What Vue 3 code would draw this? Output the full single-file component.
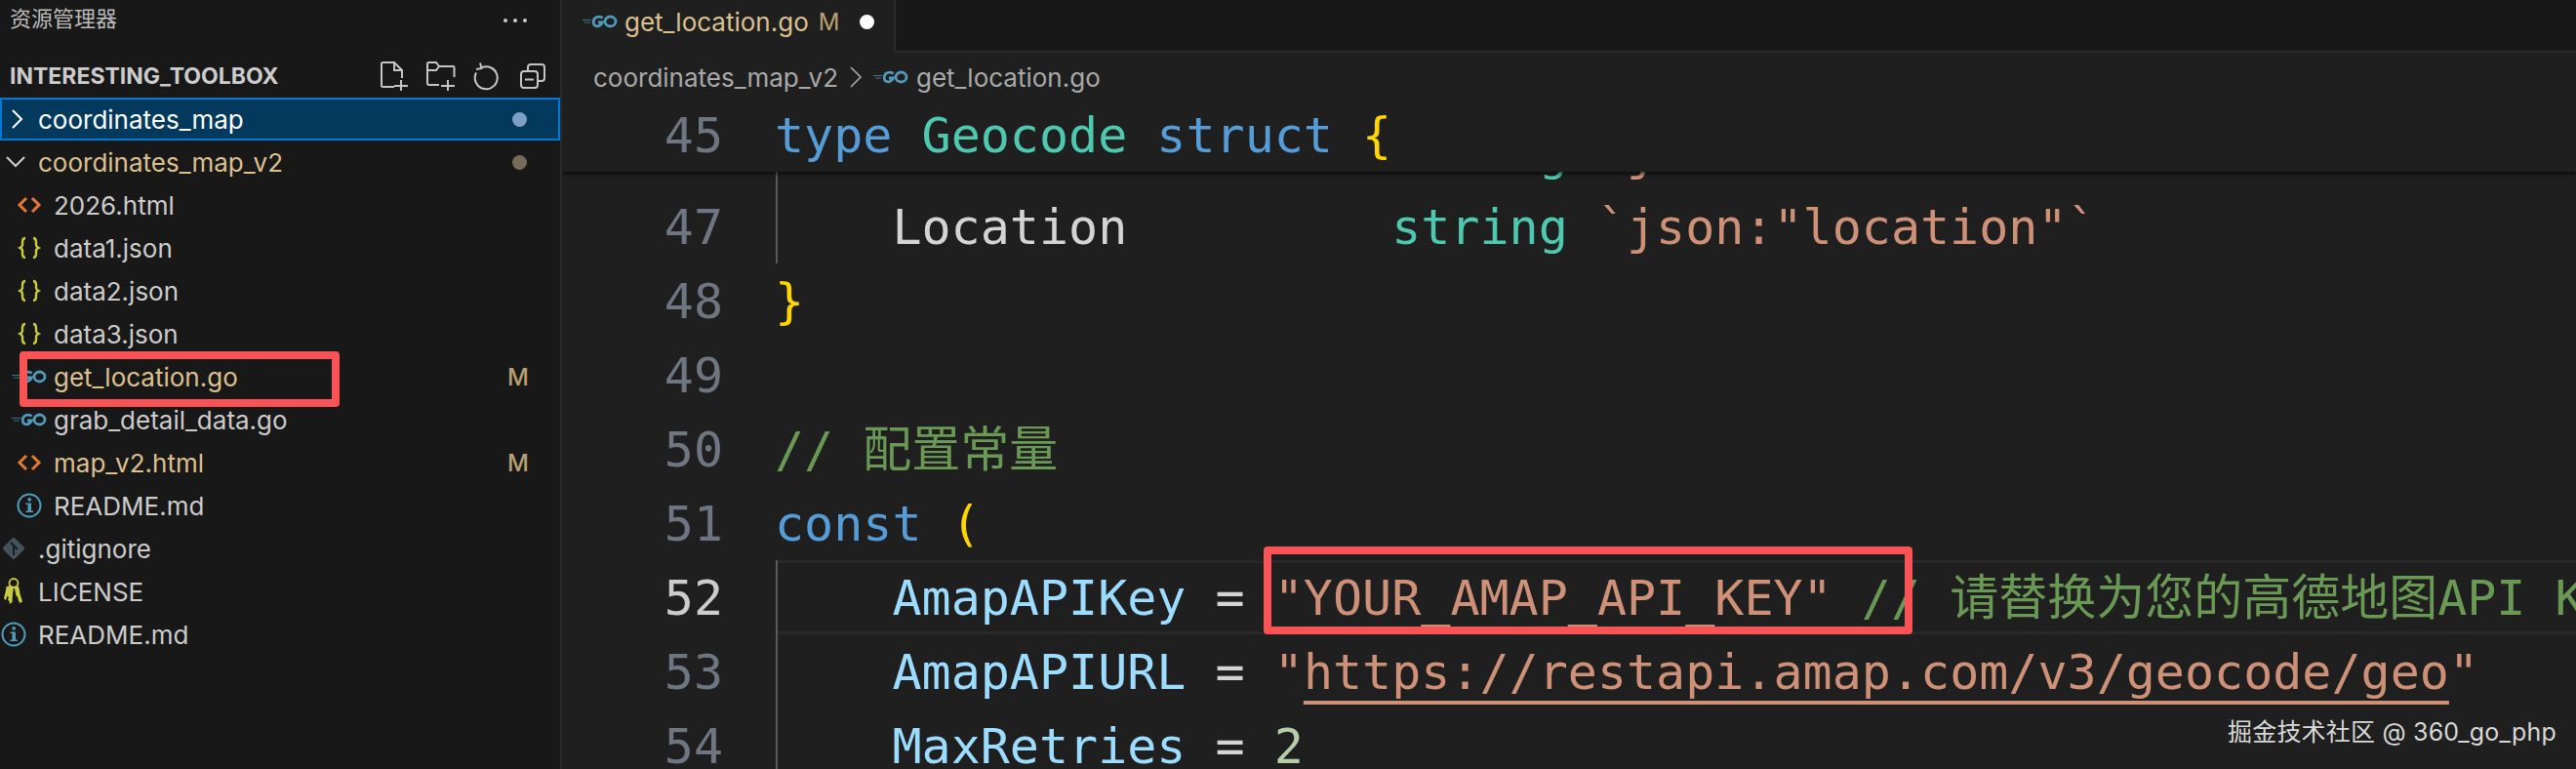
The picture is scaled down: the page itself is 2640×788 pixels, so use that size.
<script setup>
const rows = [
  { name: 'coordinates_map', depth: 0, icon: 'closed', selected: true, dot: '#7e9fc4' },
  { name: 'coordinates_map_v2', depth: 0, icon: 'open', mod: true, dot: '#776b58' },
  { name: '2026.html', depth: 1, icon: 'html' },
  { name: 'data1.json', depth: 1, icon: 'json' },
  { name: 'data2.json', depth: 1, icon: 'json' },
  { name: 'data3.json', depth: 1, icon: 'json' },
  { name: 'get_location.go', depth: 1, icon: 'go', mod: true, badge: 'M' },
  { name: 'grab_detail_data.go', depth: 1, icon: 'go' },
  { name: 'map_v2.html', depth: 1, icon: 'html', mod: true, badge: 'M' },
  { name: 'README.md', depth: 1, icon: 'info' },
  { name: '.gitignore', depth: 0, icon: 'git' },
  { name: 'LICENSE', depth: 0, icon: 'key' },
  { name: 'README.md', depth: 0, icon: 'info' }
]

const lines = [
  { n: 46, guide: true, tokens: [['p', '    Formatted        '], ['t', 'string'], ['p', ' '], ['s', '`json:"formatted"`']] },
  { n: 47, guide: true, tokens: [['p', '    Location         '], ['t', 'string'], ['p', ' '], ['s', '`json:"location"`']] },
  { n: 48, tokens: [['b', '}']] },
  { n: 49, tokens: [] },
  { n: 50, tokens: [['c', '// 配置常量']] },
  { n: 51, tokens: [['k', 'const'], ['p', ' '], ['b', '(']] },
  { n: 52, guide: true, active: true, tokens: [['p', '    '], ['v', 'AmapAPIKey'], ['p', ' = '], ['s', '"YOUR_AMAP_API_KEY"'], ['p', ' '], ['c', '// 请替换为您的高德地图API Key']] },
  { n: 53, guide: true, tokens: [['p', '    '], ['v', 'AmapAPIURL'], ['p', ' = '], ['s', '"'], ['u', 'https://restapi.amap.com/v3/geocode/geo'], ['s', '"']] },
  { n: 54, guide: true, tokens: [['p', '    '], ['v', 'MaxRetries'], ['p', ' = '], ['d', '2']] }
]
</script>

<template>
  <div class="app">
    <aside class="sidebar">
      <div class="title-bar">
        <span class="title">资源管理器</span>
        <span class="more"><i></i><i></i><i></i></span>
      </div>
      <div class="section">
        <span class="section-name">INTERESTING_TOOLBOX</span>
        <div class="actions">
          <svg viewBox="0 0 32 32"><path d="M15 27H3.500a1.500 1.500 0 0 1-1.500-1.500V3.500A1.500 1.500 0 0 1 3.500 2H15l8 8v8M15 2v8h8M22 20v11M15 26h14" /></svg>
          <svg viewBox="0 0 32 32"><path d="M14 25H3.500A1.500 1.500 0 0 1 2 23.500V3.500A1.500 1.500 0 0 1 3.500 2H11l3 4h14.500a1 1 0 0 1 1 1v10M2 10h9l3-4M23 20v11M16 26h14" /></svg>
          <svg viewBox="0 0 32 32"><path d="M10 7.500A11.500 11.500 0 1 1 5 12.500M9 2.500l1.500 5.500L5 9" /></svg>
          <svg viewBox="0 0 32 32"><path d="M11 11V7a3 3 0 0 1 3-3h11a3 3 0 0 1 3 3v11a3 3 0 0 1-3 3h-4M7 11h11a3 3 0 0 1 3 3v11a3 3 0 0 1-3 3H7a3 3 0 0 1-3-3V14a3 3 0 0 1 3-3zM8 19.500h9" /></svg>
        </div>
      </div>
      <div
        v-for="(row, i) in rows"
        :key="i"
        class="row"
        :class="{ selected: row.selected, modified: row.mod, nested: row.depth === 1 }"
      >
        <span class="icon">
          <svg v-if="row.icon === 'closed'" class="chev" viewBox="0 0 28 28"><path d="M13 5l9 9-9 9" /></svg>
          <svg v-else-if="row.icon === 'open'" class="chev" viewBox="0 0 28 28"><path d="M7 9l9 9 9-9" /></svg>
          <svg v-else-if="row.icon === 'html'" class="html" viewBox="0 0 28 28"><path d="M11 7l-7 7 7 7M17 7l7 7-7 7" /></svg>
          <svg v-else-if="row.icon === 'json'" class="json" viewBox="0 0 28 28">
            <path d="M10 4C7 4 7 6 7 8v3c0 2-1.500 2.500-2.500 3 1 .5 2.500 1 2.500 3v3c0 2 0 4 3 4M18 4c3 0 3 2 3 4v3c0 2 1.500 2.500 2.500 3-1 .5-2.500 1-2.500 3v3c0 2 0 4-3 4" />
          </svg>
          <svg v-else-if="row.icon === 'go'" class="go" viewBox="0 0 36 14">
            <path class="speed" d="M0 5.500h9M2 8h6" />
            <path d="M20.500 3.500C19 1.800 15 1.500 12.800 3.600 10.500 5.800 10.600 10 13 11.300 15.500 12.600 19 11.500 20.300 8H16" />
            <ellipse cx="28.500" cy="7" rx="5.500" ry="5" />
          </svg>
          <svg v-else-if="row.icon === 'info'" class="info" viewBox="0 0 28 28">
            <circle cx="14" cy="14" r="11.500" />
            <path class="fill" d="M12.300 7.800a1.900 1.900 0 1 1 3.800 0 1.900 1.900 0 0 1-3.800 0zM10.500 11.500h5.500v8h2V21h-7.500v-1.500h2v-6.500h-2z" />
          </svg>
          <svg v-else-if="row.icon === 'git'" class="git" viewBox="0 0 28 28">
            <path class="diamond" d="M12.600 3.600a2 2 0 0 1 2.800 0l9 9a2 2 0 0 1 0 2.800l-9 9a2 2 0 0 1-2.800 0l-9-9a2 2 0 0 1 0-2.800z" />
            <path class="branch" d="M11 8l3 3v10M14 11l4 4" />
          </svg>
          <svg v-else-if="row.icon === 'key'" class="key" viewBox="0 0 28 28">
            <circle class="ring" cx="14" cy="5.500" r="4.500" />
            <path d="M8 9c2-1.500 5-1.500 5.500 1 .5 2 0 4-.5 6l-.5 9-2.500 2-.5-3-1.500-1.500 1-2.500-1.500-1.500-1 3-1 1.500-1.500-2 1.500-6c.5-2 1-4.500 1-6z" />
            <path d="M14.500 9c2-1 4.500-.5 5 1.500.5 2 .5 4 1 6l2.500 8-2.500 1.500-1.500-2.500-1-4-1.500-1-1-5z" />
          </svg>
        </span>
        <span class="name">{{ row.name }}</span>
        <span v-if="row.dot" class="dot" :style="{ background: row.dot }"></span>
        <span v-if="row.badge" class="badge">{{ row.badge }}</span>
      </div>
    </aside>

    <main class="editor">
      <div class="tabs">
        <div class="tab">
          <svg class="go" viewBox="0 0 36 14">
            <path class="speed" d="M0 5.500h9M2 8h6" />
            <path d="M20.500 3.500C19 1.800 15 1.500 12.800 3.600 10.500 5.800 10.600 10 13 11.300 15.500 12.600 19 11.500 20.300 8H16" />
            <ellipse cx="28.500" cy="7" rx="5.500" ry="5" />
          </svg>
          <span class="tab-name">get_location.go</span>
          <span class="tab-m">M</span>
          <span class="tab-dot"></span>
        </div>
      </div>
      <div class="crumbs">
        <span>coordinates_map_v2</span>
        <svg class="crumb-chev" viewBox="0 0 16 28"><path d="M3 4l10 10L3 24" /></svg>
        <svg class="go" viewBox="0 0 36 14">
          <path class="speed" d="M0 5.500h9M2 8h6" />
          <path d="M20.500 3.500C19 1.800 15 1.500 12.800 3.600 10.500 5.800 10.600 10 13 11.300 15.500 12.600 19 11.500 20.300 8H16" />
          <ellipse cx="28.500" cy="7" rx="5.500" ry="5" />
        </svg>
        <span class="crumb-file">get_location.go</span>
      </div>
      <div class="code">
        <div class="line sticky">
          <span class="num">45</span>
          <span class="text"><span class="k">type</span> <span class="t">Geocode</span> <span class="k">struct</span> <span class="b">{</span></span>
        </div>
        <div
          v-for="line in lines"
          :key="line.n"
          class="line"
          :class="{ guided: line.guide, current: line.active }"
        >
          <span class="num">{{ line.n }}</span>
          <span class="text"><span v-for="(tok, i) in line.tokens" :key="i" :class="tok[0]">{{ tok[1] }}</span></span>
        </div>
      </div>
    </main>

    <div class="mark mark-file"></div>
    <div class="mark mark-key"></div>
    <div class="watermark">掘金技术社区 @ 360_go_php</div>
  </div>
</template>

<style scoped>
.app {
  position: relative;
  display: flex;
  width: 2640px;
  height: 788px;
  overflow: hidden;
  background: #1f1f1f;
  font-family: Inter, "Noto Sans CJK SC", sans-serif;
  font-size: 26px;
  color: #cccccc;
}
svg { display: block; fill: none; stroke: currentColor; }

.sidebar {
  width: 574px;
  flex: none;
  background: #181818;
  border-right: 2px solid #2b2b2b;
}
.title-bar {
  height: 42px;
  box-sizing: border-box;
  display: flex;
  align-items: center;
  justify-content: space-between;
  padding: 0 34px 0 10px;
}
.title { font-size: 22px; line-height: 28px; margin-top: -5px; color: #bbbbbb; }
.more { display: flex; gap: 6px; }
.more i { width: 4px; height: 4px; border-radius: 50%; background: #cccccc; }
.section {
  height: 58px;
  padding: 14px 12px 0 10px;
  box-sizing: border-box;
  display: flex;
  align-items: center;
  justify-content: space-between;
}
.section-name { font-size: 23px; font-weight: 700; color: #cccccc; }
.actions { display: flex; gap: 15px; color: #c5c5c5; }
.actions svg { width: 32px; height: 32px; stroke-width: 2; }

.row {
  height: 44px;
  display: flex;
  align-items: center;
  padding-right: 34px;
}
.row.nested { padding-left: 16px; }
.row.selected { background: #04395e; box-shadow: inset 0 0 0 2px #0078d4; color: #ffffff; }
.row.modified { color: #dcc08f; }
.icon {
  width: 28px;
  height: 28px;
  margin-right: 11px;
  flex: none;
  display: flex;
  align-items: center;
  justify-content: center;
}
.icon svg { width: 28px; height: 28px; flex: none; }
.chev { stroke-width: 2; color: #d0d0d0; }
.selected .chev { color: #ffffff; }
.html { color: #e37933; stroke-width: 3; }
.json { color: #cbcb41; stroke-width: 2.400; }
.info { color: #519aba; stroke-width: 2; }
.info .fill { fill: #519aba; stroke: none; }
.git .diamond { fill: #41535b; stroke: none; }
.git .branch { stroke: #181818; stroke-width: 1.800; }
.key { color: #cbcb41; }
.key path { fill: #cbcb41; stroke: none; }
.key .ring { stroke-width: 1.800; }

.icon svg.go, .editor svg.go { width: 36px; height: 14px; }
.go { color: #519aba; stroke-width: 2.800; flex: none; }
.go .speed { stroke-width: 1; opacity: .7; }

.name { flex: 1; white-space: nowrap; }
.dot { width: 15px; height: 15px; border-radius: 50%; }
.badge { font-size: 24px; font-weight: 500; margin-right: -2px; color: #b9a172; }

.editor { flex: 1; min-width: 0; display: flex; flex-direction: column; }
.tabs {
  height: 54px;
  flex: none;
  background: #181818;
  box-shadow: inset 0 -2px 0 #2b2b2b;
  display: flex;
}
.tab {
  width: 342px;
  height: 54px;
  background: #1f1f1f;
  border-right: 2px solid #2b2b2b;
  box-sizing: border-box;
  padding: 0 0 10px 21px;
  display: flex;
  align-items: center;
  color: #dcc08f;
}
.tab-name { margin-left: 7px; }
.tab-m { margin-left: 10px; font-size: 24px; color: #b9a172; }
.tab-dot { width: 15px; height: 15px; border-radius: 50%; background: #ffffff; margin-left: 21px; }
.crumbs {
  height: 46px;
  flex: none;
  box-sizing: border-box;
  padding: 4px 0 0 32px;
  display: flex;
  align-items: center;
  color: #a9a9a9;
}
.crumb-chev { width: 16px; height: 28px; margin: 0 10px 0 10px; stroke-width: 1.600; flex: none; }
.crumb-file { margin-left: 8px; }

.code {
  flex: 1;
  min-height: 0;
  overflow: hidden;
  font-family: "DejaVu Sans Mono", "Noto Sans CJK SC", monospace;
  font-size: 50px;
  white-space: pre;
}
.line { display: flex; height: 76px; line-height: 78px; }
.line.sticky {
  position: relative;
  z-index: 2;
  background: #1f1f1f;
  box-shadow: 0 2px 4px rgba(0, 0, 0, .7);
  margin-bottom: -58px;
}
.num {
  width: 165px;
  flex: none;
  text-align: right;
  color: #6e7681;
}
.line.current .num { color: #cccccc; }
.text {
  flex: 1;
  margin-left: 54px;
  border-left: 2px solid transparent;
  text-indent: -3px;
  color: #d4d4d4;
}
.line.guided .text { border-left-color: #5a5a5a; }
.line.current .text { box-shadow: inset 0 3px 0 #282828, inset 0 -3px 0 #282828; }
.k { color: #569cd6; }
.t { color: #4ec9b0; }
.v { color: #9cdcfe; }
.s, .u { color: #ce9178; }
.u { text-decoration: underline; text-decoration-thickness: 4px; text-underline-offset: 12px; }
.c { color: #6a9955; }
.d { color: #b5cea8; }
.b { color: #ffd700; }

.mark { position: absolute; border: 8px solid #f95355; border-radius: 4px; box-sizing: border-box; }
.mark-file { left: 20px; top: 360px; width: 328px; height: 57px; }
.mark-key { left: 1295px; top: 560px; width: 665px; height: 90px; }
.watermark {
  position: absolute;
  left: 2283px;
  top: 736px;
  font-size: 25px;
  line-height: 28px;
  letter-spacing: .2px;
  color: #d8d8d8;
  white-space: nowrap;
}
</style>
